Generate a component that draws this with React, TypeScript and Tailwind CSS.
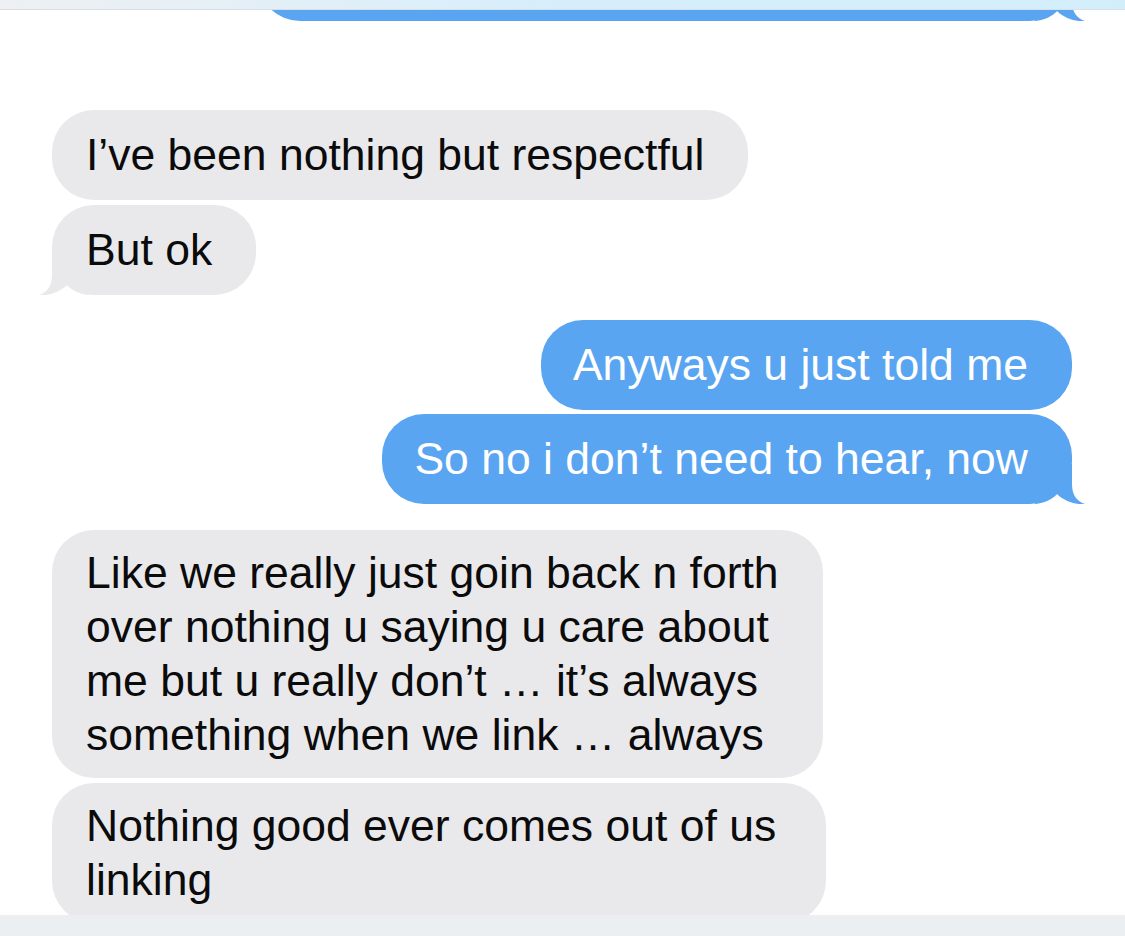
import React from "react";

const BLUE = "#5aa5f1";
const GRAY = "#e9e9eb";

function Tail(props: { side: "left" | "right"; color: string }) {
  const { side, color } = props;
  // tail sits on the bottom corner of the bubble
  return (
    <svg
      width="50"
      height="40"
      viewBox="0 0 50 40"
      className={
        side === "right"
          ? "absolute bottom-0 right-[-13px]"
          : "absolute bottom-0 left-[-13px] -scale-x-100"
      }
    >
      <path
        d="M0 0 H37 V20 C37 30 41 37 50 40 C42 41 30 38 22 30 C18 35 10 39 0 40 Z"
        fill={color}
      />
    </svg>
  );
}

function Bubble(props: any) {
  const { me, tail, className = "", children } = props;
  const color = me ? BLUE : GRAY;
  return (
    <div
      className={`relative rounded-[42px] text-[44.5px] leading-[54px] whitespace-nowrap ${
        me ? "bg-[#5aa5f1] text-white pl-[32px] pr-[44px]" : "bg-[#e9e9eb] text-[#0b0b0b] pl-[34px] pr-[44px]"
      } ${className}`}
    >
      <span className="relative z-10">{children}</span>
      {tail && <Tail side={me ? "right" : "left"} color={color} />}
    </div>
  );
}

export default function App() {
  return (
    <div
      className="h-[936px] w-[1125px] flex flex-col bg-white overflow-hidden"
      style={{ fontFamily: '"Liberation Sans", Arial, sans-serif' }}
    >
      <div className="h-[10px] shrink-0 bg-gradient-to-r from-[#eef0f3] via-[#d6eefb] to-[#d3eefb] border-b border-[#dadfe3]" />

      <div className="flex-1 overflow-hidden pl-[52px] pr-[53px] flex flex-col">
        {/* partially scrolled-away bubble */}
        <div className="h-[11px] shrink-0 overflow-hidden flex items-end justify-end -mr-[20px] pr-[20px]">
          <Bubble me tail className="w-[814px] h-[90px] shrink-0" />
        </div>

        <div className="mt-[89px] flex flex-col items-start gap-[5px]">
          <Bubble className="py-[18px]">I’ve been nothing but respectful</Bubble>
          <Bubble tail className="py-[18px]">
            But ok
          </Bubble>
        </div>

        <div className="mt-[25px] flex flex-col items-end gap-[4px]">
          <Bubble me className="py-[18px]">
            Anyways u just told me
          </Bubble>
          <Bubble me tail className="py-[18px]">
            So no i don’t need to hear, now
          </Bubble>
        </div>

        <div className="mt-[26px] flex flex-col items-start gap-[5px]">
          <Bubble className="w-[771px] py-[16px]">
            Like we really just goin back n forth
            <br />
            over nothing u saying u care about
            <br />
            me but u really don’t … it’s always
            <br />
            something when we link … always
          </Bubble>
          <Bubble className="w-[774px] py-[16px] shrink-0">
            Nothing good ever comes out of us
            <br />
            linking
          </Bubble>
        </div>
      </div>

      <div className="h-[21px] shrink-0 bg-[#ebeff2]" />
    </div>
  );
}
